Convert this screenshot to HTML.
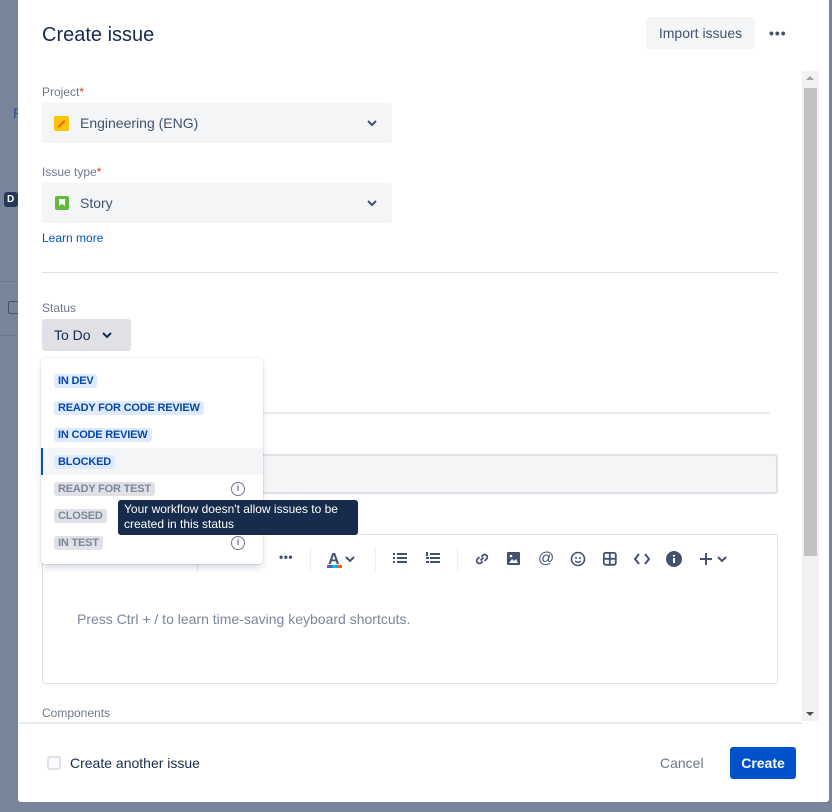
<!DOCTYPE html>
<html><head><meta charset="utf-8"><style>
*{box-sizing:border-box;margin:0;padding:0}
body{width:832px;height:812px;overflow:hidden;background:#77849a;font-family:"Liberation Sans",sans-serif;color:#172b4d;position:relative}
.abs{position:absolute}
.modal{position:absolute;left:18px;top:0;width:811px;height:802px;background:#fff;border-radius:0 0 3px 3px}
.lbl{position:absolute;font-size:12px;color:#6b778c;font-weight:normal}
.req{color:#de350b}
.sel{position:absolute;left:42px;width:350px;height:40px;background:#f4f5f7;border-radius:3px;font-size:14px;color:#42526e}
.lz{font-size:11px;font-weight:bold;padding:1px 4px;border-radius:3px;position:absolute;left:54px;letter-spacing:-0.2px}
.blue{background:#deebff;color:#0747a6}
.grey{background:#dfe1e6;color:#7a869a}
.ic{position:absolute;width:14px;height:14px;border:1.5px solid #6b778c;border-radius:50%;font-size:9px;font-weight:bold;color:#6b778c;text-align:center;line-height:11px}
.tb{position:absolute;top:551px;font-size:14px;color:#42526e}
</style></head><body>
<div class="abs" style="left:13px;top:105px;color:#2d4a8a;font-size:14px">P</div>
<div class="abs" style="left:4px;top:192px;width:14px;height:15px;background:#253858;border-radius:3px;color:#fff;font-size:10px;font-weight:bold;padding:2px 0 0 3px">D</div>
<div class="abs" style="left:0;top:281px;width:18px;height:1px;background:#6b778c"></div>
<div class="abs" style="left:8px;top:301px;width:12px;height:13px;border:1.5px solid #42526e;border-radius:2px"></div>
<div class="abs" style="left:0;top:335px;width:18px;height:1px;background:#6b778c"></div>
<div class="modal"></div>
<div class="abs" style="left:42px;top:24px;font-size:20px;color:#172b4d">Create issue</div>
<div class="abs" style="left:646px;top:17px;width:109px;height:32px;background:#f4f5f7;border-radius:3px;font-size:14px;color:#42526e;text-align:center;line-height:32px">Import issues</div>
<div class="abs" style="left:769px;top:25px;font-size:14px;color:#42526e;letter-spacing:1px;font-weight:bold">•••</div>
<div class="abs" style="left:802px;top:71px;width:17px;height:650px;background:#f1f1f1"></div>
<div class="abs" style="left:804px;top:88px;width:13px;height:468px;background:#c1c1c1"></div>
<div class="abs" style="left:806px;top:76px;width:0;height:0;border-left:4px solid transparent;border-right:4px solid transparent;border-bottom:4px solid #a3a3a3"></div>
<div class="abs" style="left:806px;top:712px;width:0;height:0;border-left:4px solid transparent;border-right:4px solid transparent;border-top:4px solid #505050"></div>

<div class="lbl" style="left:42px;top:85px">Project<span class="req">*</span></div>
<div class="sel" style="top:103px">
 <div class="abs" style="left:12px;top:13px;width:15px;height:15px;background:#ffc400;border-radius:2px"><div style="margin:7px 3px;width:9px;height:2px;background:#ff5630;transform:rotate(-45deg)"></div></div>
 <div class="abs" style="left:38px;top:12px">Engineering (ENG)</div>
 <svg class="abs" style="left:325px;top:16px" width="10" height="8"><path d="M1 2l4 4 4-4" stroke="#42526e" stroke-width="2" fill="none"/></svg>
</div>
<div class="lbl" style="left:42px;top:165px">Issue type<span class="req">*</span></div>
<div class="sel" style="top:183px">
 <div class="abs" style="left:13px;top:13px;width:14px;height:14px;background:#63ba3c;border-radius:2px"><div style="margin:3px 4px;width:6px;height:7px;background:#fff;clip-path:polygon(0 0,100% 0,100% 100%,50% 70%,0 100%)"></div></div>
 <div class="abs" style="left:38px;top:12px">Story</div>
 <svg class="abs" style="left:325px;top:16px" width="10" height="8"><path d="M1 2l4 4 4-4" stroke="#42526e" stroke-width="2" fill="none"/></svg>
</div>
<div class="abs" style="left:42px;top:231px;font-size:12px;color:#0052cc">Learn more</div>
<div class="abs" style="left:42px;top:272px;width:736px;height:1px;background:#dfe1e6"></div>
<div class="lbl" style="left:42px;top:301px">Status</div>
<div class="abs" style="left:42px;top:319px;width:89px;height:32px;background:#dfe1e6;border-radius:3px;font-size:14px;color:#172b4d"><span class="abs" style="left:12px;top:8px">To Do</span>
<svg class="abs" style="left:60px;top:12px" width="10" height="8"><path d="M1 2l4 4 4-4" stroke="#172b4d" stroke-width="2" fill="none"/></svg></div>
<div class="abs" style="left:263px;top:412px;width:507px;height:2px;background:#ebecf0"></div>
<div class="abs" style="left:42px;top:454px;width:736px;height:40px;background:#f4f5f7;border:2px solid #dfe1e6;border-radius:3px"></div>
<div class="abs" style="left:42px;top:534px;width:736px;height:150px;border:1px solid #dfe1e6;border-radius:3px"></div>
<div class="abs" style="left:197px;top:545px;width:1px;height:26px;background:#dfe1e6"></div>
<div class="tb" style="left:279px;top:550px;font-weight:bold;letter-spacing:0.5px;font-size:12px">•••</div>
<div class="abs" style="left:310px;top:547px;width:1px;height:24px;background:#ebecf0"></div>
<div class="tb" style="left:328px;font-weight:bold;font-size:16px">A</div>
<div class="abs" style="left:327px;top:565px;width:15px;height:3px;background:linear-gradient(90deg,#6554c0 33%,#00b8d9 33% 66%,#ff5630 66%)"></div>
<svg class="abs" style="left:345px;top:555px" width="10" height="8"><path d="M1 2l4 4 4-4" stroke="#42526e" stroke-width="2" fill="none"/></svg>
<div class="abs" style="left:375px;top:547px;width:1px;height:24px;background:#ebecf0"></div>
<svg class="abs" style="left:393px;top:552px" width="14" height="12"><g fill="#42526e"><rect x="0" y="1" width="2" height="2"/><rect x="0" y="5" width="2" height="2"/><rect x="0" y="9" width="2" height="2"/><rect x="4" y="1" width="10" height="2"/><rect x="4" y="5" width="10" height="2"/><rect x="4" y="9" width="10" height="2"/></g></svg>
<svg class="abs" style="left:426px;top:552px" width="14" height="12"><g fill="#42526e"><rect x="0" y="0" width="2" height="4"/><rect x="0" y="5" width="3" height="2"/><rect x="0" y="9" width="3" height="2"/><rect x="4" y="1" width="10" height="2"/><rect x="4" y="5" width="10" height="2"/><rect x="4" y="9" width="10" height="2"/></g></svg>
<div class="abs" style="left:457px;top:547px;width:1px;height:24px;background:#ebecf0"></div>
<svg class="abs" style="left:473px;top:550px" width="18" height="18"><path d="M7.5 10.5l3-3M6.5 7l-2 2a2.6 2.6 0 003.7 3.7l1.5-1.5M11.5 11l2-2a2.6 2.6 0 00-3.7-3.7L8.3 6.8" stroke="#42526e" stroke-width="1.8" fill="none"/></svg>
<svg class="abs" style="left:507px;top:552px" width="14" height="14"><rect x="0" y="0" width="13" height="13" rx="1" fill="#42526e"/><path d="M2 11l3-4 2 2 2-2 2 4z" fill="#fff"/><circle cx="4" cy="4" r="1.3" fill="#fff"/></svg>
<div class="tb" style="left:538px;top:550px;font-size:16px">@</div>
<svg class="abs" style="left:570px;top:551px" width="16" height="16"><circle cx="8" cy="8" r="6.5" stroke="#42526e" stroke-width="1.6" fill="none"/><circle cx="6" cy="7" r="1" fill="#42526e"/><circle cx="10" cy="7" r="1" fill="#42526e"/><path d="M5 10q3 2.5 6 0" stroke="#42526e" stroke-width="1.4" fill="none"/></svg>
<svg class="abs" style="left:603px;top:552px" width="14" height="14"><rect x="0.8" y="0.8" width="12" height="12" rx="2" stroke="#42526e" stroke-width="1.8" fill="none"/><path d="M6.8 1v12M1 6.8h12" stroke="#42526e" stroke-width="1.8"/></svg>
<svg class="abs" style="left:634px;top:552px" width="16" height="14"><path d="M5 2L1 7l4 5M11 2l4 5-4 5" stroke="#42526e" stroke-width="2" fill="none"/></svg>
<svg class="abs" style="left:666px;top:551px" width="16" height="16"><circle cx="8" cy="8" r="8" fill="#42526e"/><rect x="7" y="7" width="2" height="5" fill="#fff"/><circle cx="8" cy="4.8" r="1.1" fill="#fff"/></svg>
<svg class="abs" style="left:699px;top:552px" width="14" height="14"><path d="M7 1v12M1 7h12" stroke="#42526e" stroke-width="2"/></svg>
<svg class="abs" style="left:717px;top:555px" width="10" height="8"><path d="M1 2l4 4 4-4" stroke="#42526e" stroke-width="2" fill="none"/></svg>
<div class="abs" style="left:77px;top:611px;font-size:14px;color:#7a869a">Press Ctrl + / to learn time-saving keyboard shortcuts.</div>
<div class="lbl" style="left:42px;top:706px">Components</div>
<div class="abs" style="left:18px;top:722px;width:784px;height:2px;background:#ebecf0"></div>
<div class="abs" style="left:47px;top:756px;width:14px;height:14px;border:2px solid #dfe1e6;border-radius:3px;background:#fafbfc"></div>
<div class="abs" style="left:70px;top:755px;font-size:14px;color:#172b4d">Create another issue</div>
<div class="abs" style="left:660px;top:755px;font-size:14px;color:#6b778c">Cancel</div>
<div class="abs" style="left:730px;top:747px;width:66px;height:32px;background:#0052cc;border-radius:3px;color:#fff;font-size:14px;font-weight:bold;text-align:center;line-height:32px">Create</div>
<div class="abs" style="left:41px;top:358px;width:222px;height:206px;background:#fff;border-radius:4px;box-shadow:0 4px 8px -2px rgba(9,30,66,.25),0 0 1px rgba(9,30,66,.31)"></div>
<div class="abs" style="left:41px;top:448px;width:222px;height:27px;background:#f4f5f7;border-left:2px solid #0052cc"></div>
<div class="lz blue" style="top:374px">IN DEV</div>
<div class="lz blue" style="top:401px">READY FOR CODE REVIEW</div>
<div class="lz blue" style="top:428px">IN CODE REVIEW</div>
<div class="lz blue" style="top:455px">BLOCKED</div>
<div class="lz grey" style="top:482px">READY FOR TEST</div>
<div class="lz grey" style="top:509px">CLOSED</div>
<div class="lz grey" style="top:536px">IN TEST</div>
<div class="ic" style="left:231px;top:482px">i</div>
<div class="ic" style="left:231px;top:536px">i</div>
<div class="abs" style="left:118px;top:500px;width:240px;height:35px;background:#172b4d;border-radius:3px;color:#fff;font-size:12px;line-height:15px;padding:2px 6px">Your workflow doesn't allow issues to be created in this status</div>
</body></html>
